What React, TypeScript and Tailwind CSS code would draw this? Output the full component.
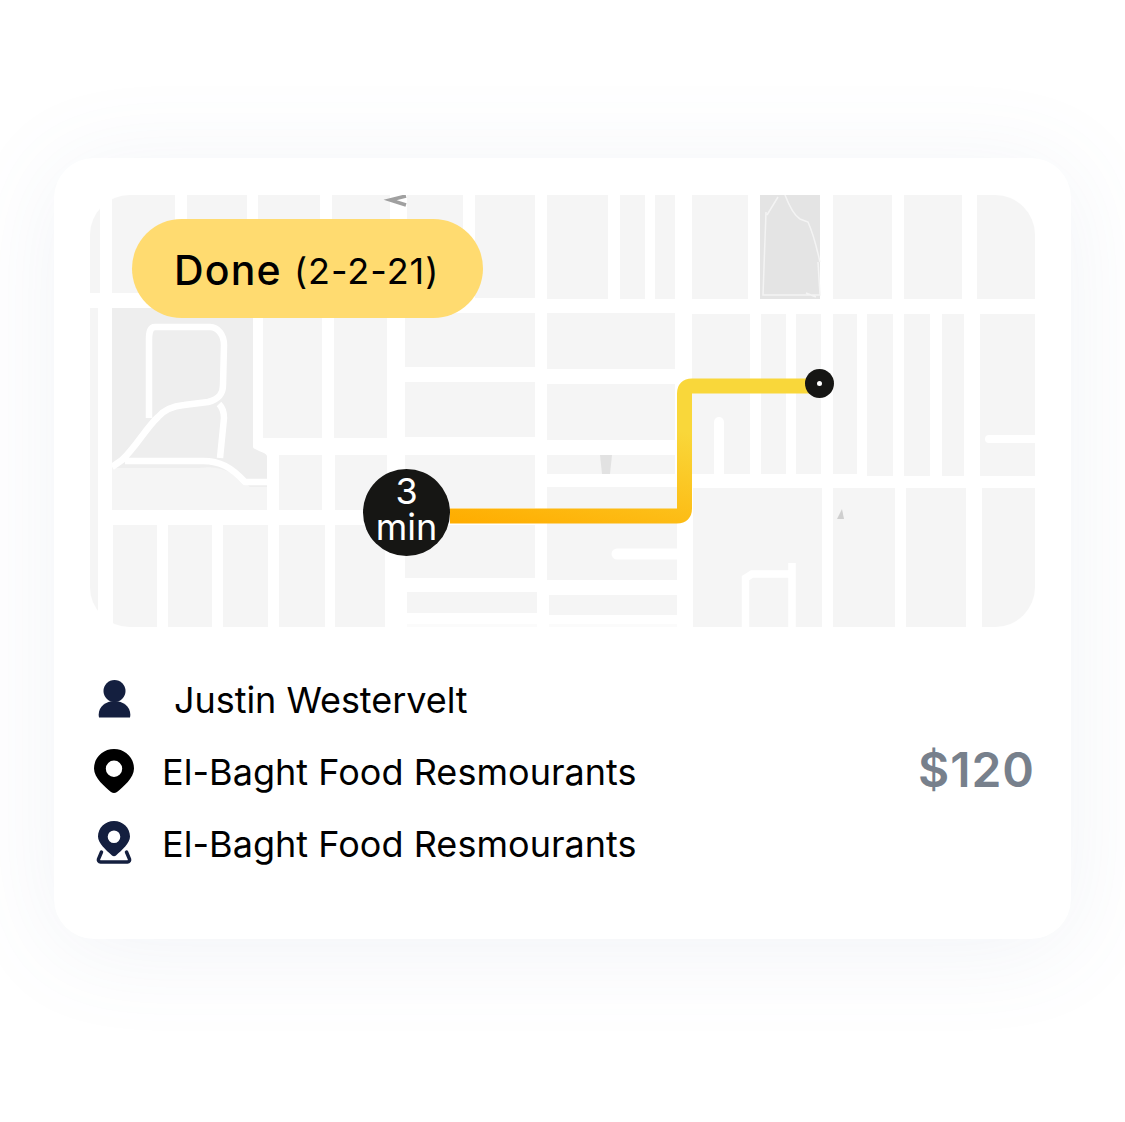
import React from "react";

const blocks: [number, number, number, number][] = [
  [90, 195, 100, 293], [112, 195, 175, 293], [187, 195, 247, 294], [258, 195, 320, 295], [332, 195, 390, 296],
  [407, 195, 463, 297], [475, 195, 535, 298], [547, 195, 608, 299], [620, 195, 645, 299], [655, 195, 675, 299],
  [692, 195, 748, 299], [833, 195, 892, 299], [904, 195, 962, 299], [977, 195, 1035, 299],
  [90, 308, 98, 627],
  [263, 318, 322, 438], [334, 318, 387, 438],
  [405, 313, 535, 367], [405, 382, 535, 437], [547, 313, 675, 369], [547, 384, 675, 440],
  [279, 455, 322, 510], [335, 455, 387, 510], [405, 455, 535, 508], [547, 455, 675, 474], [547, 487, 677, 580],
  [405, 525, 535, 578], [407, 592, 537, 613], [549, 595, 677, 615],
  [113, 525, 157, 627], [168, 525, 212, 627], [223, 525, 268, 627], [279, 525, 325, 627], [335, 525, 385, 627],
  [692, 314, 750, 474], [761, 314, 786, 474], [796, 314, 821, 474], [833, 314, 857, 474], [867, 314, 893, 476],
  [904, 314, 930, 476], [942, 314, 964, 476], [980, 314, 1035, 476],
  [693, 488, 822, 627], [833, 488, 895, 627], [906, 488, 966, 627], [982, 488, 1035, 627],
];

function MapArt() {
  return (
    <svg viewBox="90 195 945 432" className="block w-full h-full">
      <defs>
        <linearGradient id="route" gradientUnits="userSpaceOnUse" x1="450" y1="520" x2="480" y2="386">
          <stop offset="0" stopColor="#FFAD00" />
          <stop offset="1" stopColor="#F9D73A" />
        </linearGradient>
      </defs>
      <g className="blur-[0.6px]">
        {blocks.map(([x1, y1, x2, y2], i) => (
          <rect key={i} x={x1} y={y1} width={x2 - x1} height={y2 - y1} fill="#F5F5F5" />
        ))}
        <rect x="407" y="624" width="130" height="3" fill="#FBFBFB" />
        <rect x="549" y="624" width="128" height="3" fill="#FBFBFB" />
        {/* park, left */}
        <path d="M112 308H253V447C253 450 266 452 267 456V510H112Z" fill="#EEEEEE" />
        <path d="M112 468H200C222 464 236 475 250 487H267V510H112Z" fill="#F5F5F5" />
        <path
          d="M112 467L122 460C136 447 146 428 158 417C164 410 174 406 184 405L208 402C220 399 223 393 223 385L224 345C224 335 218 327 210 327H155C150 327 149 332 149 340V418M219 404C223 408 224 412 224 418L220 458M125 461H200C220 460 232 468 245 482H267"
          fill="none"
          stroke="#FFFFFF"
          strokeWidth="6.5"
          strokeLinejoin="round"
        />
        {/* park, top right */}
        <rect x="760" y="195" width="60" height="104" fill="#E4E4E4" />
        <path
          d="M767 215L778 197M785 195C790 208 795 216 800 219L808 222C815 238 817 250 820 262M766 212L763 295H820L818 262M806 293L816 297"
          fill="none"
          stroke="#F4F4F4"
          strokeWidth="1.500"
        />
        {/* small marks */}
        <path d="M600 455H612L610 474H602Z" fill="#E2E2E2" />
        <path d="M837 519L842 509L844 519Z" fill="#CFCFCF" />
        <path d="M406 196L390 200L406 205" fill="none" stroke="#A0A0A0" strokeWidth="3.500" />
        {/* white slits */}
        <path d="M719 422V476" stroke="#FFFFFF" strokeWidth="10" strokeLinecap="round" fill="none" />
        <path d="M989 439H1036" stroke="#FFFFFF" strokeWidth="8" strokeLinecap="round" fill="none" />
        <path d="M617 554H680" stroke="#FFFFFF" strokeWidth="11" strokeLinecap="round" fill="none" />
        <path d="M745.500 627V578L752 574H792V563M792 574V627" stroke="#FFFFFF" strokeWidth="7.500" fill="none" />
      </g>
      <path d="M450 516H677Q684.500 516 684.500 508.500V393.500Q684.500 386 692 386H812" stroke="url(#route)" strokeWidth="15" fill="none" />
      <circle cx="819.500" cy="383.500" r="14.500" fill="#161614" />
      <circle cx="819.500" cy="383.500" r="2.500" fill="#FFFFFF" />
    </svg>
  );
}

function PersonIcon() {
  return (
    <svg width="34" height="38" viewBox="0 0 34 38" className="mb-[2px] block shrink-0">
      <circle cx="16.500" cy="11" r="11" fill="#141F3F" />
      <path d="M1 37.500C-1 28 7 21 16.500 21S34 28 32 37.500Z" fill="#141F3F" />
    </svg>
  );
}

function PinIcon() {
  return (
    <svg width="40" height="44" viewBox="0 0 40 44" className="mb-[2px] block shrink-0">
      <path
        fillRule="evenodd"
        d="M20 0C31 0 40 8.500 40 19.500C40 29 29 38 23 43C21 44.300 19 44.300 17 43C11 38 0 29 0 19.500C0 8.500 9 0 20 0ZM20 11.500A8.200 8.200 0 1 0 20 27.900A8.200 8.200 0 1 0 20 11.500Z"
        fill="#000000"
      />
    </svg>
  );
}

function PinBaseIcon() {
  return (
    <svg width="36" height="43" viewBox="0 0 36 43" className="mb-[3px] block shrink-0">
      <path
        fillRule="evenodd"
        d="M18 0C27 0 34 7 34 15.500C34 22 26 29 20 34.500C19 35.500 17 35.500 16 34.500C10 29 2 22 2 15.500C2 7 9 0 18 0ZM18 9.500A6.300 6.300 0 1 0 18 22.100A6.300 6.300 0 1 0 18 9.500Z"
        fill="#141F3F"
      />
      <path d="M5.500 31L2.500 38C2 39.500 3 41 4.500 41H31.500C33 41 34 39.500 33.500 38L30.500 31" fill="none" stroke="#141F3F" strokeWidth="3.500" strokeLinecap="round" />
    </svg>
  );
}

export default function App() {
  return (
    <div
      className="h-[1122px] w-full overflow-hidden bg-white pl-[54px] pt-[158px] text-black"
      style={{ fontFamily: "Inter, 'Liberation Sans', sans-serif" }}
    >
      <div className="flex h-[781px] w-[1017px] flex-col rounded-[40px] bg-white px-[36px] pt-[37px] shadow-[0_10px_100px_rgba(100,125,170,0.09)]">
        <div className="relative h-[432px] w-[945px] overflow-hidden rounded-[40px]">
          <MapArt />
          <div className="absolute left-[42px] top-[24px] flex h-[99px] w-[351px] items-center gap-[12px] rounded-full bg-[#FFDB70] pl-[42px] pt-[4px]">
            <span className="text-[41px] font-medium leading-none tracking-[1.2px]">Done</span>
            <span className="text-[36px] leading-none tracking-[1px]">(2-2-21)</span>
          </div>
          <div className="absolute left-[273px] top-[274px] flex h-[87px] w-[87px] flex-col items-center justify-center rounded-full bg-[#161614] pb-[8px] text-[36px] leading-[36px] text-white">
            <span>3</span>
            <span>min</span>
          </div>
        </div>
        <div className="mt-[55px] flex items-center justify-between">
          <div className="flex flex-col gap-[36px] text-[36px] leading-[36px]">
            <div className="flex h-[36px] items-center pl-[8px]">
              <PersonIcon />
              <span className="ml-[42px] tracking-[-0.05px]">Justin Westervelt</span>
            </div>
            <div className="flex h-[36px] items-center pl-[4px]">
              <PinIcon />
              <span className="ml-[28px] tracking-[0.04px]">El-Baght Food Resmourants</span>
            </div>
            <div className="flex h-[36px] items-center pl-[6px]">
              <PinBaseIcon />
              <span className="ml-[30px] tracking-[0.04px]">El-Baght Food Resmourants</span>
            </div>
          </div>
          <div className="mb-[4px] text-[48px] font-semibold leading-none tracking-[1px] text-[#77808C]">$120</div>
        </div>
      </div>
    </div>
  );
}
